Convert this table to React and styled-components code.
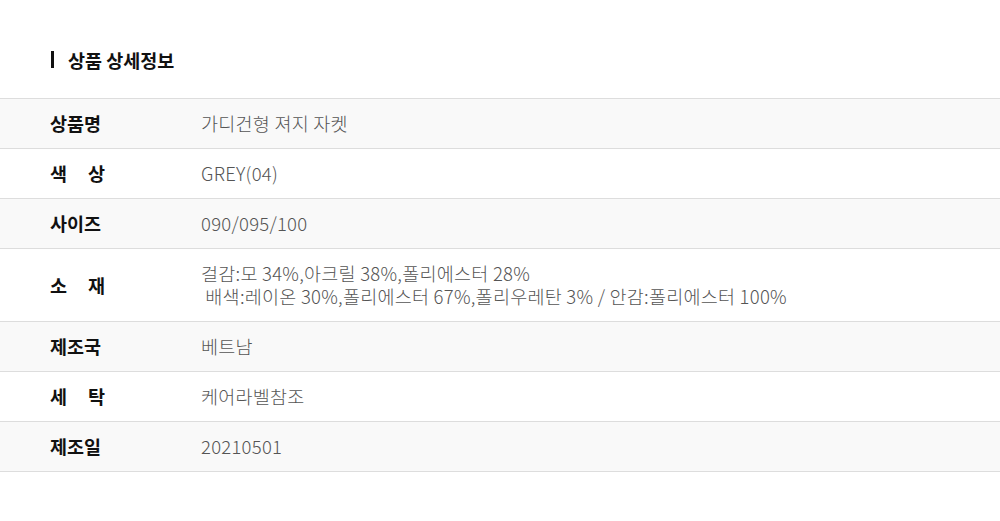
import React from 'react'
import styled, { createGlobalStyle } from 'styled-components'

const rows = [
  { label: '상품명', value: ['가디건형 져지 자켓'] },
  { label: '색 상', value: ['GREY(04)'] },
  { label: '사이즈', value: ['090/095/100'] },
  {
    label: '소 재',
    value: [
      '걸감:모 34%,아크릴 38%,폴리에스터 28%',
      '\u00a0배색:레이온 30%,폴리에스터 67%,폴리우레탄 3% / 안감:폴리에스터 100%',
    ],
  },
  { label: '제조국', value: ['베트남'] },
  { label: '세 탁', value: ['케어라벨참조'] },
  { label: '제조일', value: ['20210501'] },
]

function App() {
  return (
    <>
      <GlobalStyle />
      <Container>
        <Title>상품 상세정보</Title>
        <Table>
          {rows.map((row, i) => (
            <Row key={row.label} $shaded={i % 2 === 0}>
              <LabelCell>
                <Label>{row.label}</Label>
              </LabelCell>
              <ValueCell>
                {row.value.map((line) => (
                  <ValueLine key={line}>{line}</ValueLine>
                ))}
              </ValueCell>
            </Row>
          ))}
        </Table>
      </Container>
    </>
  )
}

export default App

const GlobalStyle = createGlobalStyle`
  body {
    margin: 0;
    background: #ffffff;
    font-family: "Noto Sans CJK KR", "Noto Sans", sans-serif;
  }
`

const Container = styled.div`
  width: 1000px;
  padding-top: 47px;
`

const Title = styled.h2`
  position: relative;
  margin: 0 0 25px;
  padding-left: 68px;
  font-size: 18.5px;
  line-height: 26px;
  font-weight: 700;
  color: #111111;

  &::before {
    content: '';
    position: absolute;
    left: 51px;
    top: 4px;
    width: 3px;
    height: 17px;
    background: #111111;
  }
`

const Table = styled.div`
  border-top: 1px solid #dddddd;
`

const Row = styled.div`
  display: flex;
  align-items: center;
  border-bottom: 1px solid #dddddd;
  background: ${(p) => (p.$shaded ? '#f9f9f9' : '#ffffff')};
`

const LabelCell = styled.div`
  flex: none;
  width: 201px;
  padding-left: 50px;
  box-sizing: border-box;
`

const Label = styled.div`
  width: 55px;
  font-size: 18.5px;
  font-weight: 700;
  color: #111111;
  line-height: 23px;
  text-align: justify;
  text-align-last: justify;
`

const ValueCell = styled.div`
  flex: 1;
  padding: 13px 0;
  font-size: 18.5px;
  font-weight: 300;
  letter-spacing: 0.25px;
  color: #555555;
`

const ValueLine = styled.div`
  height: 23px;
  line-height: 23px;
  white-space: nowrap;
`
